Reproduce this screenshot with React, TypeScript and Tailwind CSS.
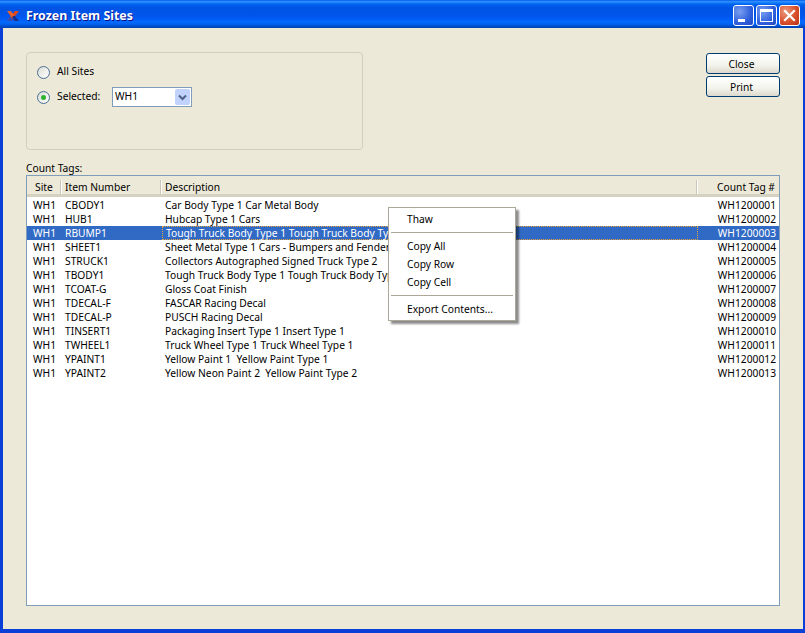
const rows = [
  ['WH1', 'CBODY1', 'Car Body Type 1 Car Metal Body', 'WH1200001'],
  ['WH1', 'HUB1', 'Hubcap Type 1 Cars', 'WH1200002'],
  ['WH1', 'RBUMP1', 'Tough Truck Body Type 1 Tough Truck Body Typ', 'WH1200003'],
  ['WH1', 'SHEET1', 'Sheet Metal Type 1 Cars - Bumpers and Fender', 'WH1200004'],
  ['WH1', 'STRUCK1', 'Collectors Autographed Signed Truck Type 2', 'WH1200005'],
  ['WH1', 'TBODY1', 'Tough Truck Body Type 1 Tough Truck Body Typ', 'WH1200006'],
  ['WH1', 'TCOAT-G', 'Gloss Coat Finish', 'WH1200007'],
  ['WH1', 'TDECAL-F', 'FASCAR Racing Decal', 'WH1200008'],
  ['WH1', 'TDECAL-P', 'PUSCH Racing Decal', 'WH1200009'],
  ['WH1', 'TINSERT1', 'Packaging Insert Type 1 Insert Type 1', 'WH1200010'],
  ['WH1', 'TWHEEL1', 'Truck Wheel Type 1 Truck Wheel Type 1', 'WH1200011'],
  ['WH1', 'YPAINT1', 'Yellow Paint 1  Yellow Paint Type 1', 'WH1200012'],
  ['WH1', 'YPAINT2', 'Yellow Neon Paint 2  Yellow Paint Type 2', 'WH1200013'],
]

function Radio({ checked }: { checked?: boolean }) {
  return (
    <span className="flex h-[13px] w-[13px] items-center justify-center rounded-full border border-[#4a6f94] bg-[linear-gradient(135deg,#dcdcd6,#ffffff)]">
      {checked && <span className="h-[5px] w-[5px] rounded-full bg-[#2fb32f]" />}
    </span>
  )
}

function Button({ label }: { label: string }) {
  return (
    <button className="h-[21px] w-[74px] rounded-[3px] border border-[#003c74] bg-[linear-gradient(180deg,#ffffff,#f3f3ec_60%,#dcd8cc)] pr-[3px] text-center leading-[18px] text-black">
      {label}
    </button>
  )
}

function WinButton({ kind }: { kind: 'min' | 'max' | 'close' }) {
  const bg =
    kind === 'close'
      ? 'bg-[radial-gradient(circle_at_30%_30%,#eb9a80,#d9502c_55%,#b8321a)]'
      : 'bg-[radial-gradient(circle_at_30%_30%,#7a9ff0,#2f5fdc_60%,#2348c4)]'
  return (
    <div className={`flex h-[21px] w-[21px] items-center justify-center rounded-[3px] border border-white ${bg}`}>
      {kind === 'min' && <span className="mt-[10px] mr-[5px] h-[3px] w-[7px] bg-white" />}
      {kind === 'max' && <span className="h-[13px] w-[13px] border border-t-[3px] border-white" />}
      {kind === 'close' && (
        <svg width="13" height="13" viewBox="0 0 13 13">
          <path d="M2 2 L11 11 M11 2 L2 11" stroke="#fff" strokeWidth="2.2" strokeLinecap="square" />
        </svg>
      )}
    </div>
  )
}

function MenuItem({ label }: { label: string }) {
  return <div className="h-[18px] pl-[18px] leading-[18px]">{label}</div>
}

function MenuLine() {
  return <div className="mx-[2px] my-[4px] h-px bg-[#aca899]" />
}

export default function App() {
  return (
    <div className="relative flex h-[633px] w-[805px] flex-col overflow-hidden bg-[#0a3fd8] font-['Noto_Sans',sans-serif] text-[10.25px] text-black">
      {/* title bar */}
      <div className="flex h-[28px] shrink-0 items-center bg-[linear-gradient(180deg,#0058ee_0%,#3593ff_6%,#127dff_10%,#0262ee_16%,#0054e3_28%,#0055eb_56%,#005bf5_68%,#026afe_78%,#0062ef_86%,#0052d6_92%,#0040ab_100%)] pl-[7px] pr-[5px] pt-[3px]">
        <svg width="12" height="10" viewBox="0 0 12 10" className="mr-[7px]">
          <path d="M12 0 L8 0 L0 10 L4.5 10 Z" fill="#e0481c" />
          <path d="M0 0 L4 0 L7.5 4.5 L5 7 Z" fill="#e8602a" />
          <path d="M5 6 L7.5 4.5 L12 10 L7.5 10 Z" fill="#1a2f86" />
          <path d="M0 10 L4.5 10 L6 8 L3.5 6 Z" fill="#2a4fc0" />
        </svg>
        <span className="mt-[2px] text-[12.4px] font-bold text-white [text-shadow:1px_1px_0_#0f1089]">
          Frozen Item Sites
        </span>
        <div className="ml-auto flex gap-[2px]">
          <WinButton kind="min" />
          <WinButton kind="max" />
          <WinButton kind="close" />
        </div>
      </div>

      {/* body */}
      <div className="relative mb-[4px] ml-[3px] mr-[2px] flex flex-1 flex-col bg-[#ece9d8] px-[23px] pt-[24px]">
        <div className="flex items-start justify-between">
          <div className="flex h-[98px] w-[337px] flex-col gap-[7px] rounded-[4px] border border-[#d0d0bf] pl-[10px] pt-[11px]">
            <label className="flex h-[16px] items-center gap-[7px]">
              <Radio />
              All Sites
            </label>
            <label className="flex h-[20px] items-center">
              <Radio checked />
              <span className="ml-[7px] w-[55px]">Selected:</span>
              <span className="flex h-[20px] w-[80px] items-center justify-between border border-[#7f9db9] bg-white pl-[2px] pr-[1px]">
                WH1
                <span className="flex h-[16px] w-[15px] items-center justify-center rounded-[2px] bg-[#c1d2fc]">
                  <svg width="9" height="7" viewBox="0 0 9 7">
                    <path d="M1 1.5 L4.5 5 L8 1.5" fill="none" stroke="#4d6185" strokeWidth="2" />
                  </svg>
                </span>
              </span>
            </label>
          </div>
          <div className="mt-px flex flex-col gap-[2px]">
            <Button label="Close" />
            <Button label="Print" />
          </div>
        </div>

        <div className="mt-[11px] h-[14px] leading-[14px]">Count Tags:</div>

        {/* list */}
        <div className="flex h-[431px] flex-col border border-[#7f9db9] bg-white">
          <div className="flex h-[21px] shrink-0 border-b-[3px] border-[#d6d2c2] bg-[#ece9d8] pt-[4px] leading-[14px]">
            <div className="w-[35px] pl-[8px] shadow-[inset_-1px_0_0_#ffffff,inset_-2px_0_0_#cbc7b8]">Site</div>
            <div className="w-[100px] pl-[3px] shadow-[inset_-1px_0_0_#ffffff,inset_-2px_0_0_#cbc7b8]">Item Number</div>
            <div className="flex-1 pl-[3px] shadow-[inset_-1px_0_0_#ffffff,inset_-2px_0_0_#cbc7b8]">Description</div>
            <div className="w-[81px] pr-[4px] text-right">Count Tag #</div>
          </div>
          <div className="pt-px">
            {rows.map((r, i) => (
              <div
                key={r[1]}
                className={`flex h-[14px] leading-[14px] ${i === 2 ? 'bg-[#316ac5] text-white' : ''}`}
              >
                <div className="w-[35px] pl-[6px]">{r[0]}</div>
                <div className="w-[100px] pl-[3px]">{r[1]}</div>
                <div
                  className={`flex-1 whitespace-pre pl-[3px] ${i === 2 ? 'border border-dotted border-[#e8a33d] pl-[2px] leading-[12px]' : ''}`}
                >
                  {r[2]}
                </div>
                <div className="w-[81px] pr-[3px] text-right">{r[3]}</div>
              </div>
            ))}
          </div>
        </div>

        {/* context menu */}
        <div className="absolute left-[385px] top-[179px] h-[114px] w-[128px] border border-[#aca899] bg-white py-[2px] shadow-[3px_3px_2px_rgba(0,0,0,0.45)]">
          <MenuItem label="Thaw" />
          <MenuLine />
          <MenuItem label="Copy All" />
          <MenuItem label="Copy Row" />
          <MenuItem label="Copy Cell" />
          <MenuLine />
          <MenuItem label="Export Contents..." />
        </div>
      </div>
    </div>
  )
}
